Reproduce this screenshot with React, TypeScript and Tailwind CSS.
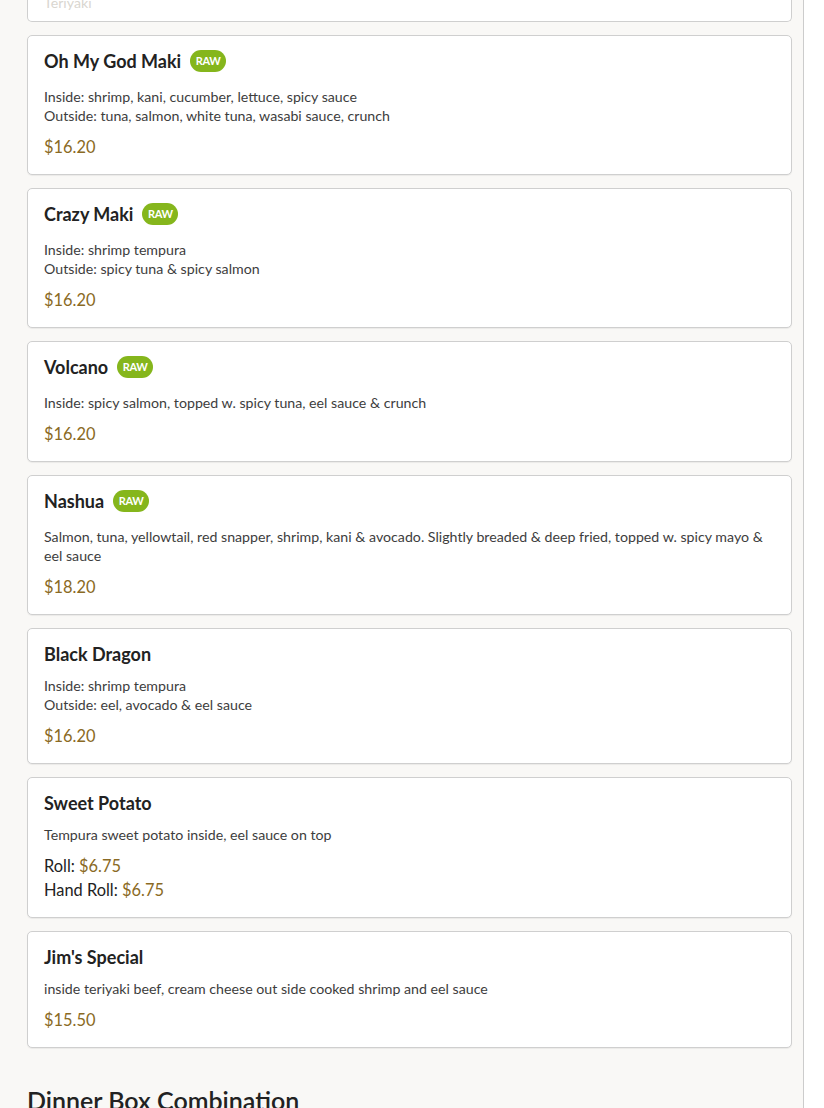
import React from "react";

type Item = {
  name: string;
  raw?: boolean;
  desc: string[];
  prices: { label?: string; value: string }[];
};

const items: Item[] = [
  {
    name: "Oh My God Maki",
    raw: true,
    desc: [
      "Inside: shrimp, kani, cucumber, lettuce, spicy sauce",
      "Outside: tuna, salmon, white tuna, wasabi sauce, crunch",
    ],
    prices: [{ value: "$16.20" }],
  },
  {
    name: "Crazy Maki",
    raw: true,
    desc: ["Inside: shrimp tempura", "Outside: spicy tuna & spicy salmon"],
    prices: [{ value: "$16.20" }],
  },
  {
    name: "Volcano",
    raw: true,
    desc: ["Inside: spicy salmon, topped w. spicy tuna, eel sauce & crunch"],
    prices: [{ value: "$16.20" }],
  },
  {
    name: "Nashua",
    raw: true,
    desc: [
      "Salmon, tuna, yellowtail, red snapper, shrimp, kani & avocado. Slightly breaded & deep fried, topped w. spicy mayo & eel sauce",
    ],
    prices: [{ value: "$18.20" }],
  },
  {
    name: "Black Dragon",
    desc: ["Inside: shrimp tempura", "Outside: eel, avocado & eel sauce"],
    prices: [{ value: "$16.20" }],
  },
  {
    name: "Sweet Potato",
    desc: ["Tempura sweet potato inside, eel sauce on top"],
    prices: [
      { label: "Roll:", value: "$6.75" },
      { label: "Hand Roll:", value: "$6.75" },
    ],
  },
  {
    name: "Jim's Special",
    desc: ["inside teriyaki beef, cream cheese out side cooked shrimp and eel sauce"],
    prices: [{ value: "$15.50" }],
  },
];

function Card({ item }: { item: Item }) {
  return (
    <div className="bg-white border border-[#cfcfcf] rounded-[5px] px-4 pt-4 pb-[17px] shadow-[0_1px_1px_rgba(0,0,0,0.06)]">
      <div className="flex items-center gap-[9px] h-[18px]">
        <h3 className="text-[18px] leading-[18px] font-bold text-[#222]">{item.name}</h3>
        {item.raw && (
          <span className="inline-flex items-center justify-center h-[22px] w-[36px] rounded-full bg-[#85b61c] text-white text-[11px] font-bold tracking-tight">
            RAW
          </span>
        )}
      </div>
      <div className={`${item.raw ? "mt-[17px]" : "mt-[13px]"} text-[14.2px] leading-[19px] text-[#3d3d3d]`}>
        {item.desc.map((d, i) => (
          <p key={i}>{d}</p>
        ))}
      </div>
      <div className="mt-[12px] flex flex-col gap-[4px]">
        {item.prices.map((p, i) => (
          <div key={i} className="text-[16.4px] leading-[20px] text-[#222]">
            {p.label && <span>{p.label} </span>}
            <span className="text-[#8a6a24]">{p.value}</span>
          </div>
        ))}
      </div>
    </div>
  );
}

export default function App() {
  return (
    <div className="w-[824px] h-[1108px] overflow-hidden bg-white" style={{ fontFamily: "Lato, 'Open Sans', sans-serif" }}>
      <div className="w-[804px] h-full bg-[#f9f8f6] border-r border-[#cccccc] pl-[27px] pr-[11px]">
        <div className="flex flex-col gap-[13px]">
          <div className="h-[22px] bg-white border border-t-0 border-[#cfcfcf] rounded-b-[5px] px-4 overflow-hidden">
            <p className="-mt-[7px] text-[14.2px] leading-[19px] text-[#d9d6d0]">Teriyaki</p>
          </div>
          {items.map((it) => (
            <Card key={it.name} item={it} />
          ))}
        </div>
        <h2 className="mt-[37px] text-[25px] leading-[30px] font-semibold text-[#222]">Dinner Box Combination</h2>
      </div>
    </div>
  );
}
